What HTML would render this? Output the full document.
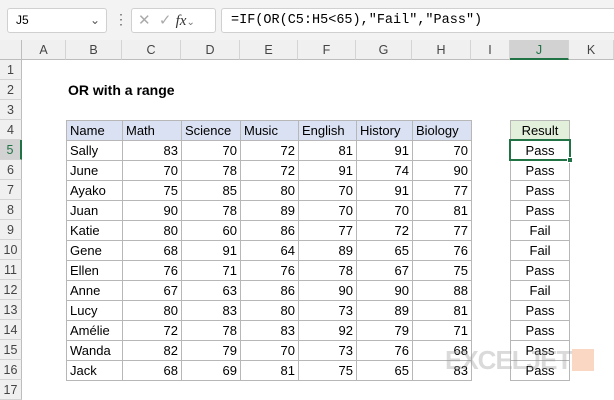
<!DOCTYPE html>
<html><head><style>
*{margin:0;padding:0;box-sizing:border-box}
body{width:614px;height:400px;position:relative;background:#fff;font-family:"Liberation Sans",Calibri,sans-serif;font-size:13px;color:#000;overflow:hidden}
.a{position:absolute}
.ch{position:absolute;top:40px;height:20px;background:#f0f0f0;border-right:1px solid #d4d4d4;border-bottom:1px solid #bdbdbd;text-align:center;line-height:20px;color:#444;font-size:12.5px}
.rh{position:absolute;left:0;width:22px;height:20px;background:#f0f0f0;border-bottom:1px solid #d4d4d4;border-right:1px solid #bdbdbd;text-align:center;line-height:20px;color:#444;font-size:12.5px}
.c{position:absolute;height:21px;border:1px solid #b7b7b7;line-height:19px;padding:0 3px;white-space:nowrap}
.r{text-align:right}
.h{background:#d9e1f2}
.j{text-align:center}
</style></head><body>
<div class="a" style="left:0;top:0;width:614px;height:40px;background:#f3f3f3"></div>
<div class="a" style="left:7px;top:8px;width:100px;height:25px;background:#fff;border:1px solid #d0d0d0;border-radius:3px;line-height:23px;padding-left:8px;font-size:12px">J5<span style="position:absolute;right:6px;color:#555">&#8964;</span></div>
<div class="a" style="left:114px;top:11px;color:#666;font-size:14px">&#8942;</div>
<div class="a" style="left:131px;top:8px;width:85px;height:25px;background:#fff;border:1px solid #d0d0d0;border-radius:3px;line-height:23px;color:#aaa;font-size:15px;padding-left:6px">✕&nbsp; ✓ <i style="font-family:'Liberation Serif',serif;color:#333">fx</i><span style="font-size:10px;color:#777">&#8964;</span></div>
<div class="a" style="left:221px;top:8px;width:400px;height:25px;background:#fff;border:1px solid #d0d0d0;border-radius:3px;line-height:23px;padding-left:9px;font-family:'Liberation Mono',monospace;font-size:13.5px">=IF(OR(C5:H5&lt;65),"Fail","Pass")</div>
<div class="a" style="left:0;top:40px;width:22px;height:20px;background:#f0f0f0;border-right:1px solid #bdbdbd;border-bottom:1px solid #bdbdbd"></div>
<div class="ch" style="left:22px;width:44px">A</div>
<div class="ch" style="left:66px;width:56px">B</div>
<div class="ch" style="left:122px;width:59px">C</div>
<div class="ch" style="left:181px;width:59px">D</div>
<div class="ch" style="left:240px;width:58px">E</div>
<div class="ch" style="left:298px;width:58px">F</div>
<div class="ch" style="left:356px;width:56px">G</div>
<div class="ch" style="left:412px;width:59px">H</div>
<div class="ch" style="left:471px;width:39px">I</div>
<div class="ch" style="left:510px;width:59px;background:#d2d2d2;border-bottom:2px solid #217346;color:#217346">J</div>
<div class="ch" style="left:569px;width:45px">K</div>
<div class="rh" style="top:60px">1</div><div class="rh" style="top:80px">2</div><div class="rh" style="top:100px">3</div><div class="rh" style="top:120px">4</div>
<div class="rh" style="top:140px;background:#d2d2d2;color:#217346;border-right:2px solid #217346">5</div>
<div class="rh" style="top:160px">6</div><div class="rh" style="top:180px">7</div><div class="rh" style="top:200px">8</div><div class="rh" style="top:220px">9</div><div class="rh" style="top:240px">10</div><div class="rh" style="top:260px">11</div><div class="rh" style="top:280px">12</div><div class="rh" style="top:300px">13</div><div class="rh" style="top:320px">14</div><div class="rh" style="top:340px">15</div><div class="rh" style="top:360px">16</div><div class="rh" style="top:380px">17</div>
<div class="a" style="left:68px;top:82px;font-weight:bold;font-size:14px">OR with a range</div>
<div id="t"></div>
<script>
var cols=[66,122,181,240,298,356,412,471];
var d=[["Name","Math","Science","Music","English","History","Biology"],
["Sally",83,70,72,81,91,70],["June",70,78,72,91,74,90],["Ayako",75,85,80,70,91,77],["Juan",90,78,89,70,70,81],["Katie",80,60,86,77,72,77],["Gene",68,91,64,89,65,76],["Ellen",76,71,76,78,67,75],["Anne",67,63,86,90,90,88],["Lucy",80,83,80,73,89,81],["Amélie",72,78,83,92,79,71],["Wanda",82,79,70,73,76,68],["Jack",68,69,81,75,65,83]];
var res=["Result","Pass","Pass","Pass","Pass","Fail","Fail","Pass","Fail","Pass","Pass","Pass","Pass"];
var h="";
for(var i=0;i<d.length;i++){var y=120+i*20;
for(var k=0;k<7;k++){h+='<div class="c'+(i==0?' h':(k>0?' r':''))+'" style="left:'+cols[k]+'px;top:'+y+'px;width:'+(cols[k+1]-cols[k]+1)+'px">'+d[i][k]+'</div>';}
h+='<div class="c j" style="left:510px;top:'+y+'px;width:60px;'+(i==0?'background:#e2efda':'')+'">'+res[i]+'</div>';}
document.getElementById('t').innerHTML=h;
</script>
<div class="a" style="left:509px;top:139px;width:62px;height:22px;border:2px solid #217346"></div>
<div class="a" style="left:567px;top:157px;width:6px;height:6px;background:#217346;border:1px solid #fff"></div>
<div class="a" style="left:445px;top:345px;font-weight:bold;font-size:26px;color:rgba(150,150,150,.35);letter-spacing:-1px">EXCELJET</div>
<div class="a" style="left:572px;top:349px;width:22px;height:22px;background:rgba(240,140,80,.35)"></div>
</body></html>
